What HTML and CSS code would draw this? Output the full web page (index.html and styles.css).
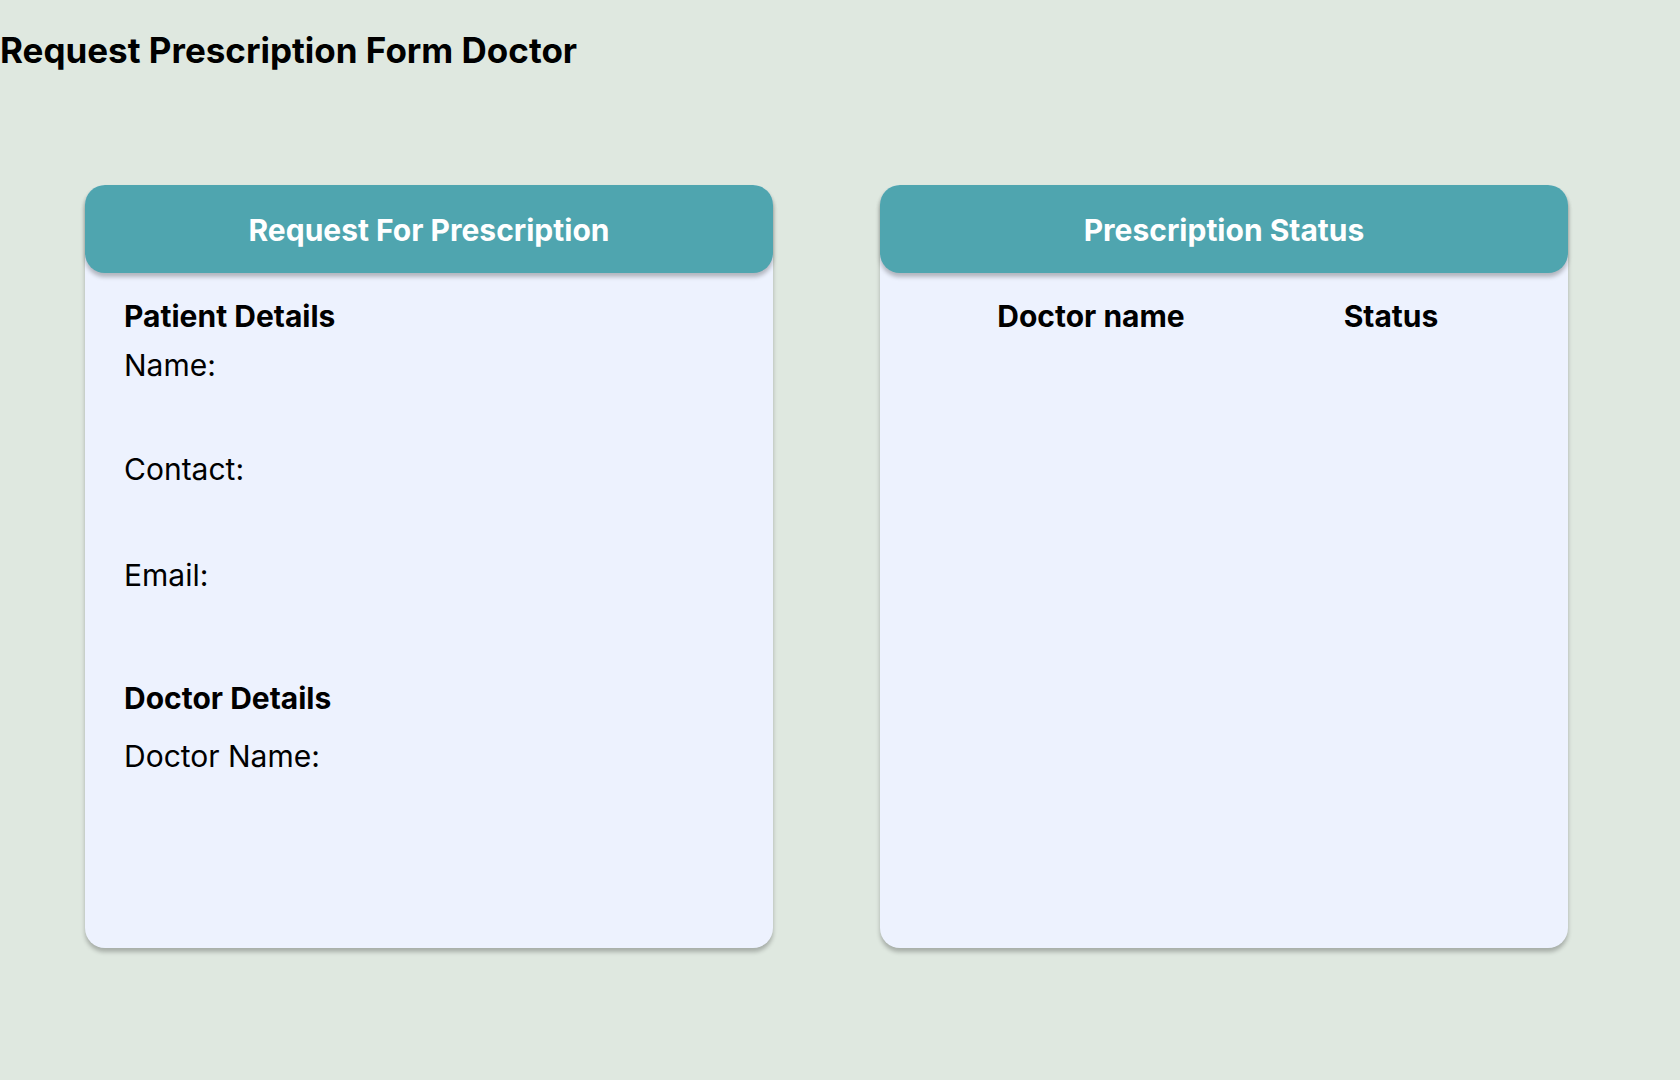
FILE: index.html
```html
<!DOCTYPE html>
<html lang="en">
<head>
<meta charset="utf-8">
<title>Request Prescription Form Doctor</title>
<link rel="stylesheet" href="styles.css">
</head>
<body>
<h1 class="page-title">Request Prescription Form Doctor</h1>
<main class="cards">
  <section class="card">
    <header class="card-header">Request For Prescription</header>
    <div class="card-body form-body">
      <h2 class="section-title">Patient Details</h2>
      <div class="field field-first">Name:</div>
      <div class="field field-gap">Contact:</div>
      <div class="field field-gap2">Email:</div>
      <h2 class="section-title section-second">Doctor Details</h2>
      <div class="field field-doctor">Doctor Name:</div>
    </div>
  </section>
  <section class="card">
    <header class="card-header">Prescription Status</header>
    <div class="card-body status-body">
      <div class="status-head">
        <div class="col-title">Doctor name</div>
        <div class="col-title">Status</div>
      </div>
    </div>
  </section>
</main>
</body>
</html>
```

FILE: styles.css
```css
* { box-sizing: border-box; }
html, body {
  margin: 0;
  padding: 0;
}
body {
  width: 1680px;
  height: 1080px;
  background: #dfe8e0;
  font-family: Inter, "Noto Sans", sans-serif;
  color: #000;
  overflow: hidden;
}
.page-title {
  margin: 0;
  padding: 29px 0 0 0;
  font-size: 35px;
  font-weight: 700;
  line-height: 42px;
  height: 71px;
}
.cards {
  display: flex;
  gap: 107px;
  padding: 114px 0 0 85px;
}
.card {
  width: 688px;
  height: 763px;
  background: #edf2fe;
  border-radius: 20px;
  box-shadow: 0 4px 4px rgba(0, 0, 0, 0.25);
  display: flex;
  flex-direction: column;
}
.card-header {
  height: 88px;
  background: #4fa5af;
  border-radius: 20px;
  box-shadow: 0 4px 4px rgba(0, 0, 0, 0.25);
  color: #fff;
  font-size: 30px;
  font-weight: 700;
  line-height: 36px;
  display: flex;
  align-items: center;
  justify-content: center;
  padding-top: 2px;
}
.card-body {
  padding: 28px 0 0 39px;
}
.section-title {
  margin: 0;
  font-size: 30px;
  font-weight: 700;
  line-height: 31px;
}
.field {
  font-size: 30px;
  font-weight: 400;
  line-height: 31px;
}
.field-first { margin-top: 18px; }
.field-gap { margin-top: 73px; }
.field-gap2 { margin-top: 75px; }
.section-second { margin-top: 92px; }
.field-doctor { margin-top: 27px; }
.status-body {
  padding-left: 61px;
}
.status-head {
  display: grid;
  grid-template-columns: 300px 300px;
}
.col-title {
  text-align: center;
  font-size: 30px;
  font-weight: 700;
  line-height: 31px;
}
```
